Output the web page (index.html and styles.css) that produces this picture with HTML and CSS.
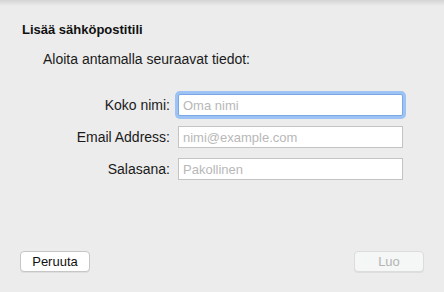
FILE: index.html
```html
<!DOCTYPE html>
<html lang="fi">
<head>
  <meta charset="UTF-8">
  <meta name="viewport" content="width=device-width, initial-scale=1.0">
  <title>Lisää sähköpostitili</title>
  <link rel="stylesheet" href="styles.css">
</head>
<body>
  <div class="sheet">
    <h1 class="title">Lisää sähköpostitili</h1>
    <p class="intro">Aloita antamalla seuraavat tiedot:</p>
    <form class="fields" action="">
      <label for="name">Koko nimi:</label>
      <input id="name" class="focused" placeholder="Oma nimi">
      <label for="email">Email Address:</label>
      <input id="email" placeholder="nimi@example.com">
      <label for="pass">Salasana:</label>
      <input id="pass" type="password" placeholder="Pakollinen">
    </form>
    <div class="actions">
      <button class="btn">Peruuta</button>
      <button class="btn disabled" disabled>Luo</button>
    </div>
  </div>
</body>
</html>
```

FILE: styles.css
```css
html, body {
  margin: 0;
  height: 100%;
}
body {
  font-family: "Liberation Sans", Arial, sans-serif;
  font-size: 14px;
  color: #1a1a1a;
  background: linear-gradient(#d4d4d4, #ececec 6px) #ececec;
}
.sheet {
  height: 100%;
  box-sizing: border-box;
  padding: 22px 20px 20px 20px;
  display: flex;
  flex-direction: column;
}
.title {
  font-size: 13px;
  line-height: 15px;
  font-weight: bold;
  margin: 0 0 0 2px;
  color: #111;
}
.intro {
  margin: 14px 0 0 23px;
  line-height: 16px;
}
.fields {
  margin-top: 27px;
  display: grid;
  grid-template-columns: 150px 225px;
  column-gap: 8px;
  row-gap: 10px;
  align-items: center;
}
.fields label {
  text-align: right;
}
.fields input {
  height: 22px;
  box-sizing: border-box;
  border: 1px solid #c3c3c3;
  background: #fff;
  padding: 0 4px;
  font-family: inherit;
  font-size: 13px;
  margin: 0;
  outline: none;
}
.fields input::placeholder {
  color: #b8b8b8;
}
.fields input.focused {
  border-color: #7aa7e6;
  box-shadow: 0 0 0 3px #9cc3f4;
  border-radius: 2px;
}
.actions {
  margin-top: auto;
  display: flex;
  justify-content: space-between;
}
.btn {
  width: 70px;
  height: 21px;
  box-sizing: border-box;
  border: 1px solid #c6c6c6;
  border-radius: 4px;
  background: #fff;
  font-family: inherit;
  font-size: 13px;
  color: #111;
  padding: 0;
  box-shadow: 0 1px 0 rgba(0, 0, 0, 0.06);
}
.btn.disabled {
  background: #f5f6f6;
  border-color: #dcdcdc;
  color: #b4b4b4;
}
```
